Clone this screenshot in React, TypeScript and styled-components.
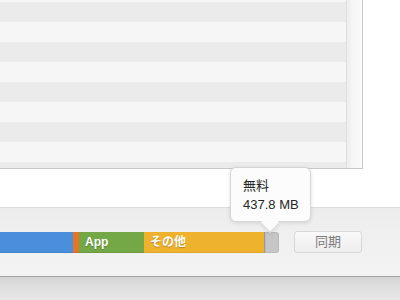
import { FC } from 'react';
import styled, { createGlobalStyle } from 'styled-components';

const GlobalStyle = createGlobalStyle`
	html, body {
		margin: 0;
		padding: 0;
		background: #ffffff;
	}

	body {
		font-family: 'Liberation Sans', 'Noto Sans CJK JP', sans-serif;
	}
`;

interface Segment {
	label?: string;
	color: string;
	width: number;
}

const segments: Segment[] = [
	{ color: '#4a8fdb', width: 73 },
	{ color: '#e5742b', width: 4 },
	{ label: 'App', color: '#74a846', width: 65 },
	{ label: 'その他', color: '#efb22c', width: 120 },
];

const rows = Array.from({ length: 10 }, (_, i) => i);

const App: FC = () => {
	return (
		<Root>
			<GlobalStyle />
			<ListFrame>
				<List>
					<Rows>
						{rows.map((i) => (
							<Row key={i} $odd={i % 2 === 1} />
						))}
					</Rows>
				</List>
				<ScrollTrack />
			</ListFrame>
			<Gap />
			<Panel>
				<BarRow>
					<Bar>
						{segments.map((s, i) => (
							<BarSegment key={i} $color={s.color} style={{ width: s.width }}>
								{s.label}
							</BarSegment>
						))}
						<FreeSegment />
					</Bar>
					<SyncButton>同期</SyncButton>
				</BarRow>
				<Tooltip>
					<TipLine>無料</TipLine>
					<TipLine>437.8 MB</TipLine>
					<TipArrow />
				</Tooltip>
			</Panel>
			<BottomStrip />
		</Root>
	);
};

export default App;

const Root = styled.div`
	position: relative;
	width: 400px;
	height: 300px;
	overflow: hidden;
	display: flex;
	flex-direction: column;
	background: #ffffff;
`;

const ListFrame = styled.div`
	display: flex;
	width: 362px;
	height: 168px;
	border-right: 1px solid #c9c9c9;
	border-bottom: 1px solid #c9c9c9;
	flex-shrink: 0;
`;

const List = styled.div`
	flex: 1;
	overflow: hidden;
`;

const Rows = styled.div`
	margin-top: -18px;
`;

const Row = styled.div<{ $odd: boolean }>`
	height: 20px;
	background: ${(p) => (p.$odd ? '#ebebeb' : '#f6f6f6')};
`;

const ScrollTrack = styled.div`
	width: 15px;
	border-left: 1px solid #dedede;
	background: linear-gradient(to right, #ececec 0%, #f6f6f6 40%, #fafafa 100%);
`;

const Gap = styled.div`
	height: 38px;
	flex-shrink: 0;
	background: #ffffff;
`;

const Panel = styled.div`
	position: relative;
	height: 69px;
	flex-shrink: 0;
	border-top: 1px solid #dcdcdc;
	background: linear-gradient(to bottom, #ececec 0%, #f0f0f0 40%, #f3f3f3 100%);
	padding-top: 23px;
	box-sizing: border-box;
`;

const BarRow = styled.div`
	display: flex;
	align-items: center;
	gap: 15px;
`;

const Bar = styled.div`
	display: flex;
	height: 21px;
	width: 279px;
`;

const BarSegment = styled.div<{ $color: string }>`
	flex-shrink: 0;
	background: ${(p) => p.$color};
	color: #ffffff;
	font-weight: bold;
	font-size: 12px;
	line-height: 21px;
	padding-left: 6px;
	box-sizing: border-box;
	text-shadow: 0 1px 1px rgba(0, 0, 0, 0.25);
	white-space: nowrap;
	overflow: hidden;
	box-shadow: inset 0 -1px 0 rgba(0, 0, 0, 0.08);
`;

const FreeSegment = styled.div`
	flex: 1;
	background: #c6c6c6;
	border-left: 1px solid #9a9a9a;
	border-radius: 0 3px 3px 0;
	box-shadow: inset 0 0 0 1px rgba(0, 0, 0, 0.06);
`;

const SyncButton = styled.button`
	width: 68px;
	height: 22px;
	padding: 0;
	border: 1px solid #d8d8d8;
	border-radius: 3px;
	background: linear-gradient(to bottom, #fafafa, #ededed);
	color: #7a7a7a;
	font-family: 'Liberation Sans', 'Noto Sans CJK JP', sans-serif;
	font-size: 13px;
	line-height: 20px;
`;

const Tooltip = styled.div`
	position: absolute;
	left: 230px;
	top: -41px;
	width: 81px;
	height: 55px;
	box-sizing: border-box;
	padding: 8px 0 0 12px;
	background: #fcfcfc;
	border: 1px solid #d6d6d6;
	border-radius: 6px;
	box-shadow: 0 1px 4px rgba(0, 0, 0, 0.12);
	color: #262626;
	font-size: 13px;
`;

const TipLine = styled.div`
	line-height: 19px;
	white-space: nowrap;
`;

const TipArrow = styled.div`
	position: absolute;
	left: 32px;
	bottom: -9px;
	width: 13px;
	height: 13px;
	background: #fcfcfc;
	border-right: 1px solid #d6d6d6;
	border-bottom: 1px solid #d6d6d6;
	transform: rotate(45deg);
	box-shadow: 2px 2px 3px rgba(0, 0, 0, 0.06);
`;

const BottomStrip = styled.div`
	flex: 1;
	border-top: 1px solid #a3a3a3;
	background: linear-gradient(to bottom, #d4d4d4 0%, #e0e0e0 50%, #e8e8e8 100%);
`;
